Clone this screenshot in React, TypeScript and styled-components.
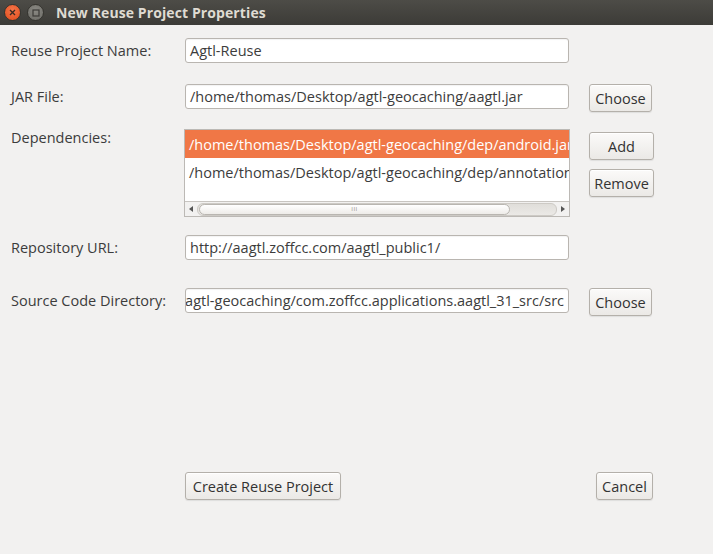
import React from 'react';
import styled, { createGlobalStyle } from 'styled-components';

const GlobalStyle = createGlobalStyle`
  html, body {
    margin: 0;
    padding: 0;
    width: 713px;
    height: 554px;
    overflow: hidden;
    background: #f2f1f0;
    font-family: 'Open Sans', 'Noto Sans', sans-serif;
  }
`;

const Window = styled.div`
  width: 713px;
  height: 554px;
  display: flex;
  flex-direction: column;
  background: #f2f1f0;
  color: #3c3c3c;
`;

const TitleBar = styled.div`
  height: 25px;
  flex-shrink: 0;
  display: flex;
  align-items: center;
  padding-left: 4px;
  background: linear-gradient(#4d4c47, #3c3b37);
`;

const WinButton = styled.div<{ $close?: boolean }>`
  width: 17px;
  height: 17px;
  border-radius: 50%;
  margin-right: 6px;
  display: flex;
  align-items: center;
  justify-content: center;
  box-sizing: border-box;
  background: ${(p) =>
    p.$close
      ? 'radial-gradient(circle at 50% 35%, #f6764a, #df4b1b)'
      : 'radial-gradient(circle at 50% 35%, #8a8983, #6b6a65)'};
  border: 1px solid #35342f;
`;

const Title = styled.div`
  margin-left: 6px;
  font-family: 'Open Sans', 'Noto Sans', sans-serif;
  font-weight: 700;
  font-size: 14px;
  color: #dfdbd2;
  letter-spacing: 0.1px;
`;

const Content = styled.div`
  flex: 1;
  display: flex;
  flex-direction: column;
  padding: 13px 0 0 11px;
`;

const Row = styled.div<{ $top: number }>`
  display: grid;
  grid-template-columns: 174px 404px auto;
  align-items: start;
  margin-top: ${(p) => p.$top}px;
`;

const Label = styled.div<{ $topAligned?: boolean }>`
  height: ${(p) => (p.$topAligned ? '18px' : '25px')};
  display: flex;
  align-items: ${(p) => (p.$topAligned ? 'flex-start' : 'center')};
  box-sizing: border-box;
  font-size: 14.5px;
  line-height: 18px;
  color: #3c3c3c;
  white-space: nowrap;
`;

const Field = styled.div<{ $end?: boolean }>`
  width: 384px;
  height: 25px;
  box-sizing: border-box;
  border: 1px solid #b9b5b0;
  border-radius: 3px;
  background: #fff;
  padding: 0 4px;
  display: flex;
  align-items: center;
  justify-content: ${(p) => (p.$end ? 'flex-end' : 'flex-start')};
  font-size: 14.5px;
  color: #3c3c3c;
  white-space: nowrap;
  overflow: hidden;
  box-shadow: inset 0 1px 1px rgba(0, 0, 0, 0.05);
`;

const Button = styled.button<{ $w: number }>`
  width: ${(p) => p.$w}px;
  height: 28px;
  box-sizing: border-box;
  border: 1px solid #b4b0aa;
  border-radius: 3px;
  background: linear-gradient(#fbfaf9, #ebe9e6);
  box-shadow: 0 1px 1px rgba(0, 0, 0, 0.08), inset 0 1px 0 #fff;
  font-family: 'Open Sans', 'Noto Sans', sans-serif;
  font-size: 14.5px;
  color: #333;
  padding: 0;
  white-space: nowrap;
  cursor: pointer;
`;

const SideButtons = styled.div`
  display: flex;
  flex-direction: column;
  gap: 9px;
  padding-top: 3px;
`;

const ListBox = styled.div`
  width: 386px;
  height: 88px;
  margin-left: -1px;
  box-sizing: border-box;
  border: 1px solid #bcb9b5;
  background: #fff;
  display: flex;
  flex-direction: column;
  overflow: hidden;
`;

const ListItem = styled.div<{ $selected?: boolean }>`
  height: 28px;
  flex-shrink: 0;
  display: flex;
  align-items: center;
  padding-left: 4px;
  font-size: 14.5px;
  white-space: nowrap;
  overflow: hidden;
  background: ${(p) => (p.$selected ? '#f07746' : '#fff')};
  color: ${(p) => (p.$selected ? '#fff' : '#3c3c3c')};
`;

const ListSpacer = styled.div`
  flex: 1;
  border-bottom: 1px solid #c8c5c1;
`;

const ScrollBar = styled.div`
  height: 14px;
  flex-shrink: 0;
  display: flex;
  align-items: center;
  background: #f2f1f0;
  padding: 0 2px;
  gap: 2px;
`;

const Arrow = styled.div`
  width: 8px;
  display: flex;
  align-items: center;
  justify-content: center;
`;

const Trough = styled.div`
  flex: 1;
  height: 11px;
  border-radius: 6px;
  background: linear-gradient(#e0deda, #ebe9e6);
  border: 1px solid #cdcac5;
  display: flex;
  align-items: center;
  padding: 0 1px;
`;

const Thumb = styled.div`
  width: 311px;
  height: 11px;
  box-sizing: border-box;
  border-radius: 6px;
  border: 1px solid #b9b6b1;
  background: linear-gradient(#ffffff, #eeece9);
  display: flex;
  align-items: center;
  justify-content: center;
`;

const Grip = styled.div`
  font-size: 6px;
  line-height: 6px;
  color: #8c8a86;
  letter-spacing: 0.5px;
`;

const Footer = styled.div`
  margin-top: auto;
  margin-bottom: 54px;
  display: grid;
  grid-template-columns: 174px 411px auto;
  align-items: center;
`;

export default function App() {
  return (
    <Window>
      <GlobalStyle />
      <TitleBar>
        <WinButton $close>
          <svg width="7" height="7" viewBox="0 0 7 7">
            <path d="M1 1L6 6M6 1L1 6" stroke="#3a2a22" strokeWidth="1.4" />
          </svg>
        </WinButton>
        <WinButton>
          <svg width="8" height="8" viewBox="0 0 8 8">
            <rect x="1" y="1" width="6" height="6" fill="none" stroke="#3c3b37" strokeWidth="1.2" />
          </svg>
        </WinButton>
        <Title>New Reuse Project Properties</Title>
      </TitleBar>
      <Content>
        <Row $top={0}>
          <Label>Reuse Project Name:</Label>
          <Field>Agtl-Reuse</Field>
        </Row>
        <Row $top={21}>
          <Label>JAR File:</Label>
          <Field>/home/thomas/Desktop/agtl-geocaching/aagtl.jar</Field>
          <Button $w={63}>Choose</Button>
        </Row>
        <Row $top={17}>
          <Label $topAligned>Dependencies:</Label>
          <ListBox>
            <ListItem $selected>/home/thomas/Desktop/agtl-geocaching/dep/android.jar</ListItem>
            <ListItem>/home/thomas/Desktop/agtl-geocaching/dep/annotations.jar</ListItem>
            <ListSpacer />
            <ScrollBar>
              <Arrow>
                <svg width="4" height="6" viewBox="0 0 4 6">
                  <path d="M4 0L0 3L4 6Z" fill="#555" />
                </svg>
              </Arrow>
              <Trough>
                <Thumb>
                  <Grip>III</Grip>
                </Thumb>
              </Trough>
              <Arrow>
                <svg width="4" height="6" viewBox="0 0 4 6">
                  <path d="M0 0L4 3L0 6Z" fill="#555" />
                </svg>
              </Arrow>
            </ScrollBar>
          </ListBox>
          <SideButtons>
            <Button $w={65}>Add</Button>
            <Button $w={65}>Remove</Button>
          </SideButtons>
        </Row>
        <Row $top={18}>
          <Label>Repository URL:</Label>
          <Field>http://aagtl.zoffcc.com/aagtl_public1/</Field>
        </Row>
        <Row $top={28}>
          <Label>Source Code Directory:</Label>
          <Field $end>
            /home/thomas/Desktop/agtl-geocaching/com.zoffcc.applications.aagtl_31_src/src
          </Field>
          <Button $w={63}>Choose</Button>
        </Row>
        <Footer>
          <span />
          <Button $w={156}>Create Reuse Project</Button>
          <Button $w={57}>Cancel</Button>
        </Footer>
      </Content>
    </Window>
  );
}
